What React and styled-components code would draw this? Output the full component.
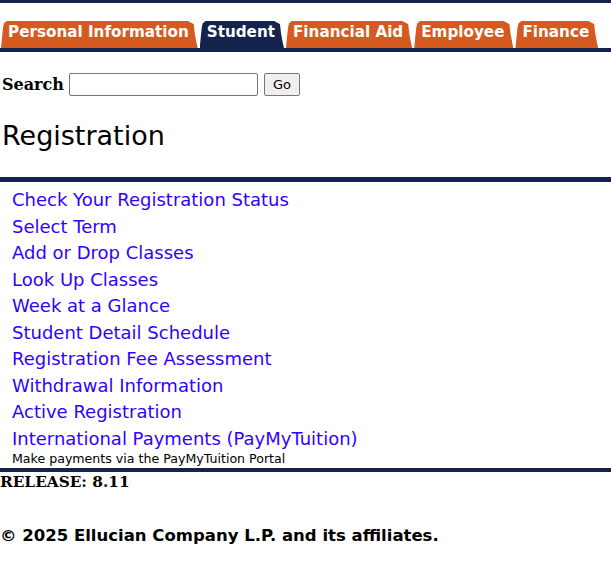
import React from 'react';
import styled, { createGlobalStyle } from 'styled-components';

const navy = '#13234b';
const orange = '#d55a20';

const GlobalStyle = createGlobalStyle`
  body {
    margin: 0;
    background: #fff;
    font-family: "DejaVu Sans", Verdana, sans-serif;
    color: #000;
  }
`;

const tabs = [
  { label: 'Personal Information' },
  { label: 'Student', active: true },
  { label: 'Financial Aid' },
  { label: 'Employee' },
  { label: 'Finance' }
];

const links = [
  'Check Your Registration Status',
  'Select Term',
  'Add or Drop Classes',
  'Look Up Classes',
  'Week at a Glance',
  'Student Detail Schedule',
  'Registration Fee Assessment',
  'Withdrawal Information',
  'Active Registration',
  'International Payments (PayMyTuition)'
];

const App = () => {
  return (
    <Page>
      <GlobalStyle />
      <TopBar />
      <TabRow>
        {tabs.map(tab => (
          <Tab key={tab.label} $active={tab.active}>{tab.label}</Tab>
        ))}
      </TabRow>
      <Rule $h={4} />

      <SearchRow>
        <label htmlFor="search">Search</label>
        <SearchInput id="search" type="text" />
        <GoButton type="button">Go</GoButton>
      </SearchRow>

      <Heading>Registration</Heading>
      <Rule $h={5} />

      <LinkList>
        {links.map(link => (
          <li key={link}><a href="#">{link}</a></li>
        ))}
      </LinkList>
      <Note>Make payments via the PayMyTuition Portal</Note>
      <Rule $h={4} />

      <Release>RELEASE: 8.11</Release>
      <Copyright>© 2025 Ellucian Company L.P. and its affiliates.</Copyright>
    </Page>
  );
};

export default App;

const Page = styled.div`
  width: 611px;
`;

const TopBar = styled.div`
  height: 3px;
  background: ${navy};
`;

const Rule = styled.div`
  height: ${p => p.$h}px;
  background: ${navy};
`;

const TabRow = styled.div`
  display: flex;
  align-items: flex-end;
  margin-top: 18px;
  padding-left: 1px;
  height: 27px;
  gap: 2px;
`;

const Tab = styled.div`
  height: 27px;
  box-sizing: border-box;
  padding: 1px 9px 0 7px;
  background: ${p => (p.$active ? navy : orange)};
  color: #fff;
  font-weight: 700;
  font-size: 15.2px;
  line-height: 20px;
  white-space: nowrap;
  clip-path: polygon(
    0 100%, 1px 60%, 2px 25%, 3px 8%, 6px 0,
    calc(100% - 10px) 0, calc(100% - 6px) 2px, calc(100% - 4px) 12%,
    calc(100% - 3px) 45%, calc(100% - 1px) 85%, 100% 100%
  );
`;

const SearchRow = styled.div`
  display: flex;
  align-items: center;
  margin-top: 21px;
  height: 23px;
  padding-left: 2px;
  label {
    font-family: "DejaVu Serif", Georgia, serif;
    font-weight: 700;
    font-size: 16px;
  }
`;

const SearchInput = styled.input`
  box-sizing: border-box;
  width: 189px;
  height: 23px;
  margin: 0 6px 0 5px;
  border: 1px solid #767676;
  border-radius: 2px;
  padding: 1px 3px;
`;

const GoButton = styled.button`
  box-sizing: border-box;
  height: 23px;
  width: 36px;
  padding: 0;
  font-family: "DejaVu Sans", Verdana, sans-serif;
  font-size: 13px;
  background: #efefef;
  border: 1px solid #767676;
  border-radius: 2px;
  color: #000;
`;

const Heading = styled.h2`
  margin: 24px 0 26px 2px;
  font-weight: 400;
  font-size: 27px;
  line-height: 31px;
`;

const LinkList = styled.ul`
  list-style: none;
  margin: 5px 0 0 12px;
  padding: 0;
  li {
    font-size: 18px;
    line-height: 26.55px;
  }
  a {
    color: #3300ff;
    text-decoration: none;
  }
`;

const Note = styled.div`
  margin-left: 12px;
  font-size: 12.6px;
  line-height: 14px;
  padding-bottom: 2px;
`;

const Release = styled.div`
  font-family: "DejaVu Serif", Georgia, serif;
  font-weight: 700;
  font-size: 15.3px;
  line-height: 21px;
`;

const Copyright = styled.div`
  margin-top: 33px;
  font-weight: 700;
  font-size: 16.5px;
  line-height: 20px;
`;
